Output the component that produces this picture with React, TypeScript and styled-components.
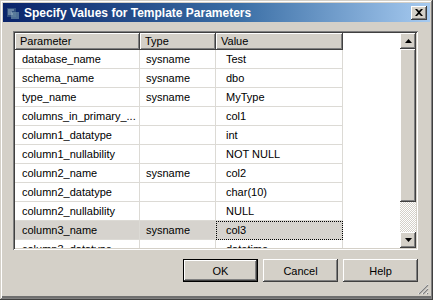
import React from 'react'
import styled, { createGlobalStyle } from 'styled-components'

const GlobalStyle = createGlobalStyle`
  html, body {
    margin: 0;
    padding: 0;
    background: #d4d0c8;
  }
  body {
    font-family: 'Liberation Sans', Arial, sans-serif;
    font-size: 11px;
    color: #000;
  }
`

const face = '#d4d0c8'

const Window = styled.div`
  position: relative;
  width: 433px;
  height: 300px;
  box-sizing: border-box;
  background: ${face};
  padding: 3px 3px 0 3px;
  box-shadow: inset -1px -1px #404040, inset 1px 1px ${face}, inset -2px -2px #808080,
    inset 2px 2px #fff, inset 0 -4px #6f6f6f;
  overflow: hidden;
`

const TitleBar = styled.div`
  display: flex;
  align-items: center;
  height: 19px;
  padding: 0 3px 0 2px;
  background: linear-gradient(to right, #0a246a 0%, #3a6ea5 55%, #a6caf0 100%);
`

const TitleIcon = styled.svg`
  width: 16px;
  height: 16px;
  flex: none;
`

const Title = styled.div`
  flex: 1;
  margin-left: 3px;
  color: #fff;
  font-weight: bold;
  font-size: 12px;
  white-space: nowrap;
`

const Raised = styled.div`
  background: ${face};
  box-shadow: inset -1px -1px #404040, inset 1px 1px #fff, inset -2px -2px #808080,
    inset 2px 2px ${face};
`

const CloseButton = styled(Raised)`
  width: 16px;
  height: 14px;
  display: flex;
  align-items: center;
  justify-content: center;
`

const Body = styled.div`
  padding: 9px 12px 0 10px;
`

const GridFrame = styled.div`
  display: flex;
  height: 219px;
  box-sizing: border-box;
  padding: 2px;
  background: #fff;
  box-shadow: inset 1px 1px #808080, inset -1px -1px #fff, inset 2px 2px #404040,
    inset -2px -2px ${face};
`

const GridArea = styled.div`
  flex: 1;
  overflow: hidden;
  background: #fff;
`

const HeaderRow = styled.div`
  display: flex;
  height: 17px;
`

const HeaderCell = styled(Raised)<{ $w: number }>`
  width: ${(p) => p.$w}px;
  flex: none;
  box-sizing: border-box;
  padding-left: 5px;
  line-height: 17px;
  white-space: nowrap;
`

const Row = styled.div`
  display: flex;
  height: 19px;
`

const Cell = styled.div<{ $w: number; $pad: number; $selected?: boolean; $focus?: boolean }>`
  width: ${(p) => p.$w}px;
  flex: none;
  box-sizing: border-box;
  padding-left: ${(p) => p.$pad}px;
  line-height: 18px;
  white-space: nowrap;
  overflow: hidden;
  border-right: 1px solid #dcdad5;
  border-bottom: 1px solid #dcdad5;
  background: ${(p) => (p.$selected ? '#d6d3ce' : '#fff')};
  outline: ${(p) => (p.$focus ? '1px dotted #000' : 'none')};
  outline-offset: -1px;
`

const ScrollBar = styled.div`
  width: 16px;
  flex: none;
  display: flex;
  flex-direction: column;
`

const ArrowButton = styled(Raised)`
  height: 16px;
  flex: none;
  display: flex;
  align-items: center;
  justify-content: center;
`

const Thumb = styled(Raised)`
  height: 153px;
  flex: none;
`

const Track = styled.div`
  flex: 1;
  background: repeating-conic-gradient(${face} 0 25%, #fff 0 50%) 0 0 / 2px 2px;
`

const ButtonRow = styled.div`
  display: flex;
  justify-content: flex-end;
  gap: 5px;
  margin-top: 9px;
`

const Button = styled(Raised)<{ $default?: boolean }>`
  width: 75px;
  height: 23px;
  box-sizing: border-box;
  display: flex;
  align-items: center;
  justify-content: center;
  font-size: 11px;
  ${(p) =>
    p.$default &&
    `box-shadow: inset 0 0 0 1px #000, inset -2px -2px #404040, inset 2px 2px #fff, inset -3px -3px #808080;`}
`

const Grip = styled.svg`
  position: absolute;
  right: 4px;
  bottom: 5px;
  width: 12px;
  height: 12px;
`

const cols = [
  { name: 'Parameter', w: 125, pad: 7 },
  { name: 'Type', w: 76, pad: 6 },
  { name: 'Value', w: 127, pad: 10 },
]

const rows: [string, string, string][] = [
  ['database_name', 'sysname', 'Test'],
  ['schema_name', 'sysname', 'dbo'],
  ['type_name', 'sysname', 'MyType'],
  ['columns_in_primary_...', '', 'col1'],
  ['column1_datatype', '', 'int'],
  ['column1_nullability', '', 'NOT NULL'],
  ['column2_name', 'sysname', 'col2'],
  ['column2_datatype', '', 'char(10)'],
  ['column2_nullability', '', 'NULL'],
  ['column3_name', 'sysname', 'col3'],
  ['column3_datatype', '', 'datetime'],
]

const SELECTED = 9

function App() {
  return (
    <>
      <GlobalStyle />
      <Window>
        <TitleBar>
          <TitleIcon viewBox="0 0 16 16">
            <rect x="2" y="3" width="9" height="9" fill="#4a6a8a" opacity="0.6" />
            <rect x="6" y="7" width="8" height="7" fill="#6c8fa8" opacity="0.7" />
            <path d="M3 5h6M3 7h4M3 9h5" stroke="#9fb7c9" strokeWidth="1" />
          </TitleIcon>
          <Title>Specify Values for Template Parameters</Title>
          <CloseButton>
            <svg width="8" height="7" viewBox="0 0 8 7">
              <path d="M0 0h2l2 2 2-2h2L5 3.5 8 7H6L4 5 2 7H0l3-3.5z" fill="#000" />
            </svg>
          </CloseButton>
        </TitleBar>
        <Body>
          <GridFrame>
            <GridArea>
              <HeaderRow>
                {cols.map((c) => (
                  <HeaderCell key={c.name} $w={c.w}>
                    {c.name}
                  </HeaderCell>
                ))}
              </HeaderRow>
              {rows.map((r, i) => (
                <Row key={r[0]}>
                  {cols.map((c, j) => (
                    <Cell
                      key={c.name}
                      $w={c.w}
                      $pad={c.pad}
                      $selected={i === SELECTED}
                      $focus={i === SELECTED && j === 2}
                    >
                      {r[j]}
                    </Cell>
                  ))}
                </Row>
              ))}
            </GridArea>
            <ScrollBar>
              <ArrowButton>
                <svg width="7" height="4" viewBox="0 0 7 4">
                  <path d="M3.5 0L7 4H0z" fill="#000" />
                </svg>
              </ArrowButton>
              <Thumb />
              <Track />
              <ArrowButton>
                <svg width="7" height="4" viewBox="0 0 7 4">
                  <path d="M0 0h7L3.5 4z" fill="#000" />
                </svg>
              </ArrowButton>
            </ScrollBar>
          </GridFrame>
          <ButtonRow>
            <Button $default>OK</Button>
            <Button>Cancel</Button>
            <Button>Help</Button>
          </ButtonRow>
        </Body>
        <Grip viewBox="0 0 12 12">
          <path d="M11 1L1 11M11 5L5 11M11 9L9 11" stroke="#fff" strokeWidth="1" />
          <path d="M11 2L2 11M11 6L6 11M11 10L10 11" stroke="#808080" strokeWidth="1.2" />
        </Grip>
      </Window>
    </>
  )
}

export default App
